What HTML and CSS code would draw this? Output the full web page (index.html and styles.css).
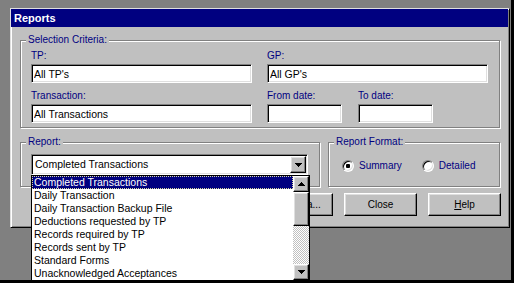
FILE: index.html
```html
<!DOCTYPE html>
<html lang="en">
<head>
  <meta charset="UTF-8">
  <meta name="viewport" content="width=device-width, initial-scale=1.0">
  <title>Reports</title>
  <link rel="stylesheet" href="styles.css">
</head>
<body>
  <div class="screen">
    <div class="dialog">
      <div class="titlebar">Reports</div>

      <fieldset class="group criteria">
        <legend>Selection Criteria:</legend>
        <div class="criteria-body">
          <div class="row">
            <label class="field">TP:<input class="textbox wide" type="text" value="All TP's" readonly></label>
            <label class="field">GP:<input class="textbox wide" type="text" value="All GP's" readonly></label>
          </div>
          <div class="row">
            <label class="field">Transaction:<input class="textbox wide" type="text" value="All Transactions" readonly></label>
            <label class="field">From date:<input class="textbox date" type="text" value="" readonly></label>
            <label class="field to-date">To date:<input class="textbox date" type="text" value="" readonly></label>
          </div>
        </div>
      </fieldset>

      <div class="report-row">
        <fieldset class="group report">
          <legend>Report:</legend>
          <div class="report-body">
            <div class="combo">
              <span class="combo-text">Completed Transactions</span>
              <span class="btn3d drop-btn">
                <svg width="7" height="4" viewBox="0 0 7 4"><path d="M0 0h7v1h-1v1h-1v1h-1v1h-1v-1h-1v-1h-1v-1h-1z"/></svg>
              </span>
            </div>
          </div>
        </fieldset>
        <fieldset class="group format">
          <legend>Report Format:</legend>
          <div class="format-body">
            <label class="radio"><span class="radio-dot checked"></span>Summary</label>
            <label class="radio"><span class="radio-dot"></span>Detailed</label>
          </div>
        </fieldset>
      </div>

      <div class="buttons">
        <button class="btn3d criteria-btn">Criteria...</button>
        <button class="btn3d">Close</button>
        <button class="btn3d"><u>H</u>elp</button>
      </div>

      <div class="listbox">
        <ul class="items">
          <li class="selected">Completed Transactions</li>
          <li>Daily Transaction</li>
          <li>Daily Transaction Backup File</li>
          <li>Deductions requested by TP</li>
          <li>Records required by TP</li>
          <li>Records sent by TP</li>
          <li>Standard Forms</li>
          <li>Unacknowledged Acceptances</li>
        </ul>
        <div class="scrollbar">
          <span class="btn3d scroll-btn">
            <svg width="7" height="4" viewBox="0 0 7 4"><path d="M3 0h1v1h1v1h1v1h1v1h-7v-1h1v-1h1v-1h1z"/></svg>
          </span>
          <span class="btn3d thumb"></span>
          <span class="track"></span>
          <span class="btn3d scroll-btn">
            <svg width="7" height="4" viewBox="0 0 7 4"><path d="M0 0h7v1h-1v1h-1v1h-1v1h-1v-1h-1v-1h-1v-1h-1z"/></svg>
          </span>
        </div>
      </div>
    </div>
  </div>
</body>
</html>
```

FILE: styles.css
```css
* {
  box-sizing: border-box;
}
body {
  margin: 0;
  background: #808080;
  font-family: "Liberation Sans", Arial, sans-serif;
  font-size: 10px;
}
.screen {
  width: 514px;
  height: 283px;
  padding: 8px 0 0 10px;
  background: #808080;
  border-right: 3px solid #000;
  border-bottom: 3px solid #000;
  overflow: hidden;
}
.dialog {
  position: relative;
  width: 500px;
  height: 220px;
  background: #c0c0c0;
  border: 1px solid;
  border-color: #dfdfdf #000 #000 #dfdfdf;
  box-shadow: inset 1px 1px #fff, inset -1px -1px #808080;
}
.titlebar {
  height: 18px;
  margin-right: 1px;
  padding-left: 3px;
  background: #000080;
  color: #fff;
  font-size: 11px;
  font-weight: bold;
  line-height: 18px;
}

/* group boxes */
.group {
  margin: 0;
  padding: 0;
  min-width: 0;
  border: 1px solid #808080;
  box-shadow: 1px 1px 0 #fff, inset 1px 1px 0 #fff;
}
.group legend {
  margin-left: 5px;
  padding: 0 2px;
  line-height: 12px;
  color: #000080;
  background: #c0c0c0;
}
.criteria {
  width: 480px;
  margin: 7px 0 0 9px;
}
.criteria-body {
  padding: 4px 0 4px 10px;
}
.row {
  display: flex;
  gap: 15px;
}
.row + .row {
  margin-top: 7px;
}
.field {
  display: flex;
  flex-direction: column;
  gap: 2px;
  color: #000080;
  line-height: 12px;
}
.to-date {
  margin-left: 1px;
}
.textbox {
  height: 19px;
  padding: 0 2px;
  font: 10.5px "Liberation Sans", Arial, sans-serif;
  color: #000;
  background: #fff;
  border: 1px solid;
  border-color: #808080 #fff #fff #808080;
  box-shadow: inset 1px 1px #000, inset -1px -1px #dfdfdf;
  outline: none;
}
.wide {
  width: 221px;
}
.date {
  width: 75px;
}

/* report + format */
.report-row {
  display: flex;
  gap: 8px;
  margin: 8px 0 0 9px;
}
.report {
  width: 300px;
}
.report-body {
  padding: 6px 0 11px 10px;
}
.combo {
  display: flex;
  width: 277px;
  height: 21px;
  background: #fff;
  border: 1px solid;
  border-color: #808080 #fff #fff #808080;
  box-shadow: inset 1px 1px #000, inset -1px -1px #dfdfdf;
}
.combo-text {
  flex: 1;
  padding-left: 3px;
  font-size: 10.5px;
  line-height: 19px;
  color: #000;
}
.btn3d {
  background: #c0c0c0;
  border: 1px solid;
  border-color: #fff #000 #000 #fff;
  box-shadow: inset -1px -1px #808080, inset 1px 1px #dfdfdf;
}
.drop-btn {
  display: flex;
  align-items: center;
  justify-content: center;
  width: 16px;
  height: 17px;
  margin: 1px;
}
.format {
  width: 172px;
}
.format-body {
  display: flex;
  align-items: center;
  gap: 20px;
  padding: 12px 0 0 13px;
}
.radio {
  display: flex;
  align-items: center;
  gap: 5px;
  color: #000080;
  line-height: 12px;
}
.radio-dot {
  width: 12px;
  height: 12px;
  border-radius: 50%;
  background: #fff;
  border: 1px solid;
  border-color: #808080 #fff #fff #808080;
  box-shadow: inset 1px 1px #000, inset -1px -1px #dfdfdf;
}
.radio-dot.checked {
  background: radial-gradient(circle, #000 0 2px, #fff 2.5px);
}

/* buttons */
.buttons {
  display: flex;
  justify-content: flex-end;
  gap: 11px;
  margin-top: 6px;
  padding-right: 8px;
}
.buttons button {
  width: 73px;
  height: 23px;
  padding: 0;
  font: 10px "Liberation Sans", Arial, sans-serif;
  color: #000;
}
.buttons .criteria-btn {
  padding-left: 8px;
}

/* open dropdown */
.listbox {
  position: absolute;
  left: 20px;
  top: 166px;
  display: flex;
  width: 279px;
  height: 106px;
  background: #fff;
  border: 1px solid #000;
}
.items {
  flex: 1;
  margin: 0;
  padding: 0;
  list-style: none;
}
.items li {
  height: 13px;
  padding-left: 2px;
  font-size: 10.5px;
  line-height: 13px;
  color: #000;
}
.items li.selected {
  background: #000080;
  color: #fff;
  outline: 1px dotted #d8d8a0;
  outline-offset: -1px;
}
.scrollbar {
  display: flex;
  flex-direction: column;
  width: 16px;
}
.scroll-btn {
  display: flex;
  align-items: center;
  justify-content: center;
  height: 16px;
}
.thumb {
  height: 34px;
}
.track {
  flex: 1;
  background-color: #fff;
  background-image: repeating-conic-gradient(#c0c0c0 0 25%, #fff 0 50%);
  background-size: 2px 2px;
}
```
